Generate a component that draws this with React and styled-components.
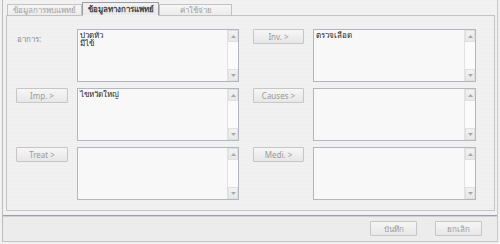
import styled, { createGlobalStyle } from "styled-components";

const GlobalStyle = createGlobalStyle`
  html, body {
    margin: 0;
    padding: 0;
    background: #eeeeee;
  }
  * {
    box-sizing: border-box;
  }
`;

const Window = styled.div`
  width: 500px;
  height: 244px;
  padding: 0 2px 2px 2px;
  background: repeating-linear-gradient(
    to bottom,
    #efefef 0px,
    #efefef 1px,
    #f3f3f3 1px,
    #f3f3f3 2px
  );
  font-family: "Noto Sans", "DejaVu Sans", sans-serif;
`;

const Shell = styled.div`
  height: 100%;
  display: flex;
  flex-direction: column;
  border-left: 1px solid #bcbcbc;
  border-right: 1px solid #c8c8c8;
  border-bottom: 1px solid #c4c4c4;
`;

const TabArea = styled.div`
  padding: 2px 2px 4px 3px;
  display: flex;
  flex-direction: column;
`;

const TabRow = styled.div`
  display: flex;
  align-items: flex-end;
  height: 14px;
  padding-left: 1px;
  margin-bottom: -1px;
  position: relative;
  z-index: 1;
`;

const Tab = styled.div`
  width: ${(p) => p.$w}px;
  height: ${(p) => (p.$active ? 14 : 12)}px;
  border: 1px solid ${(p) => (p.$active ? "#9a9ea4" : "#c2c2c2")};
  border-bottom: ${(p) => (p.$active ? "1px solid #f1f1f1" : "1px solid #c2c2c2")};
  background: ${(p) =>
    p.$active
      ? "linear-gradient(#f2f2f2, #e9e9e9)"
      : "linear-gradient(#f6f6f6, #ececec)"};
  color: ${(p) => (p.$active ? "#444" : "#a0a0a0")};
  font-size: 8px;
  font-weight: ${(p) => (p.$active ? 700 : 400)};
  display: flex;
  align-items: center;
  justify-content: center;
  line-height: 1;
  white-space: nowrap;
  overflow: hidden;
`;

const Panel = styled.div`
  height: 196px;
  border: 1px solid #c4c4c4;
  background: repeating-linear-gradient(
    to bottom,
    #eeeeee 0px,
    #eeeeee 1px,
    #f2f2f2 1px,
    #f2f2f2 2px
  );
  padding: 13px 16px 0 9px;
  display: flex;
  flex-direction: column;
  gap: 6px;
`;

const Row = styled.div`
  display: flex;
  gap: 14px;
  height: 53px;
`;

const Field = styled.div`
  display: flex;
  gap: 9px;
`;

const Side = styled.div`
  width: ${(p) => p.$w}px;
  flex-shrink: 0;
`;

const Label = styled.div`
  font-size: 8px;
  color: #8c8c8c;
  padding: 4px 0 0 1px;
`;

const Button = styled.button`
  width: ${(p) => p.$w || 52}px;
  height: 15px;
  padding: 0;
  border: 1px solid #c6c6c6;
  border-radius: 1px;
  background: linear-gradient(#f6f6f6, #e7e7e7);
  color: #9a9a9a;
  font-family: "Noto Sans", "DejaVu Sans", sans-serif;
  font-size: 8px;
  line-height: 1;
  display: flex;
  align-items: center;
  justify-content: center;
`;

const Box = styled.div`
  width: ${(p) => p.$w}px;
  height: 100%;
  display: flex;
  border: 1px solid #b2b6be;
  background: #f8f8f8;
`;

const Text = styled.textarea`
  flex: 1;
  border: none;
  outline: none;
  resize: none;
  overflow: hidden;
  background: transparent;
  padding: 1px 2px;
  margin: 0;
  font-family: "Noto Sans", "DejaVu Sans", sans-serif;
  font-size: 8px;
  line-height: 8px;
  color: #222;
`;

const ScrollBar = styled.div`
  width: 11px;
  display: flex;
  flex-direction: column;
  border-left: 1px solid #e2e2e2;
  background: #fbfbfb;
`;

const Arrow = styled.div`
  height: 12px;
  background: linear-gradient(#f2f2f2, #e8e8e8);
  border: 1px solid #e0e0e0;
  display: flex;
  align-items: center;
  justify-content: center;
`;

const Track = styled.div`
  flex: 1;
`;

const Separator = styled.div`
  height: 2px;
  border-top: 1px solid #9ca1a7;
  border-bottom: 1px solid #cdd0d4;
`;

const Footer = styled.div`
  flex: 1;
  background: #ececec;
  display: flex;
  justify-content: flex-end;
  align-items: flex-start;
  gap: 18px;
  padding: 4px 15px 0 0;
`;

const Tri = ({ up }) => (
  <svg width="5" height="3" viewBox="0 0 5 3">
    <path d={up ? "M0 3 L2.5 0 L5 3 Z" : "M0 0 L2.5 3 L5 0 Z"} fill="#a8a8a8" />
  </svg>
);

const TextBox = ({ w, value }) => (
  <Box $w={w}>
    <Text readOnly value={value} />
    <ScrollBar>
      <Arrow>
        <Tri up />
      </Arrow>
      <Track />
      <Arrow>
        <Tri />
      </Arrow>
    </ScrollBar>
  </Box>
);

const rows = [
  [
    { kind: "label", text: "อาการ:", value: "ปวดหัว\nมีไข้" },
    { kind: "button", text: "Inv. >", value: "ตรวจเลือด" },
  ],
  [
    { kind: "button", text: "Imp. >", value: "ไขหวัดใหญ่" },
    { kind: "button", text: "Causes >", value: "" },
  ],
  [
    { kind: "button", text: "Treat >", value: "" },
    { kind: "button", text: "Medi. >", value: "" },
  ],
];

const App = () => {
  return (
    <>
      <GlobalStyle />
      <Window>
        <Shell>
          <TabArea>
            <TabRow>
              <Tab $w={75}>ข้อมูลการพบแพทย์</Tab>
              <Tab $w={77} $active>
                ข้อมูลทางการแพทย์
              </Tab>
              <Tab $w={73}>ค่าใช้จ่าย</Tab>
            </TabRow>
            <Panel>
              {rows.map((row, i) => (
                <Row key={i}>
                  {row.map((f, j) => (
                    <Field key={j}>
                      <Side $w={j === 0 ? 52 : 51}>
                        {f.kind === "label" ? (
                          <Label>{f.text}</Label>
                        ) : (
                          <Button $w={j === 0 ? 52 : 51}>{f.text}</Button>
                        )}
                      </Side>
                      <TextBox w={j === 0 ? 162 : 163} value={f.value} />
                    </Field>
                  ))}
                </Row>
              ))}
            </Panel>
          </TabArea>
          <Separator />
          <Footer>
            <Button $w={47}>บันทึก</Button>
            <Button $w={47}>ยกเลิก</Button>
          </Footer>
        </Shell>
      </Window>
    </>
  );
};

export default App;
